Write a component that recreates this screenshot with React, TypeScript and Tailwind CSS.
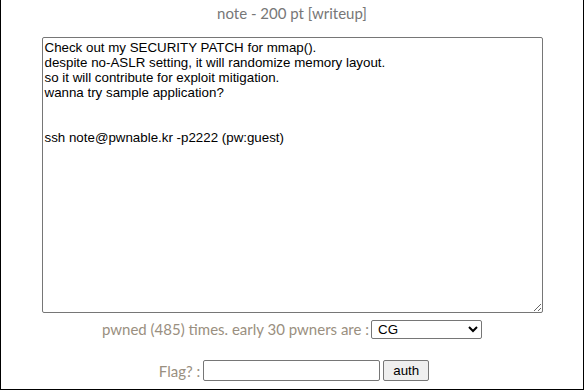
const description = `Check out my SECURITY PATCH for mmap().
despite no-ASLR setting, it will randomize memory layout.
so it will contribute for exploit mitigation.
wanna try sample application?


ssh note@pwnable.kr -p2222 (pw:guest)`;

export default function App() {
  return (
    <div className="h-[390px] w-[584px] overflow-hidden border-x border-b border-black bg-white">
      <div className="flex flex-col items-center">
        <div className="mt-[2px] h-[20px] font-['Lato',sans-serif] text-[15px] text-[#777]">
          note - 200 pt [writeup]
        </div>
        <textarea
          readOnly
          defaultValue={description}
          className="mt-[15px] h-[276px] w-[501px] resize rounded-[2px] border border-[#767676] px-[2px] pt-[2px] font-['Liberation_Sans',Arial,sans-serif] text-[13.33px] leading-[15px] text-black outline-none"
        />
        <div className="mt-[5px] flex items-center gap-[2px] font-['Lato',sans-serif] text-[15px] text-[#9a8f80]">
          <span>pwned (485) times. early 30 pwners are :</span>
          <select className="h-[19px] w-[111px] rounded-[2px] border border-[#767676] bg-white pl-[2px] font-['Liberation_Sans',Arial,sans-serif] text-[13.33px] text-black">
            <option>CG</option>
          </select>
        </div>
        <div className="mt-[19px] flex items-center gap-[3px] pl-[4px] font-['Lato',sans-serif] text-[15px] text-[#9a8f80]">
          <span>Flag? :</span>
          <input className="h-[21px] w-[177px] rounded-[2px] border border-[#767676] bg-white" />
          <button className="h-[21px] rounded-[2px] border border-[#767676] bg-[#efefef] px-[9px] font-['Liberation_Sans',Arial,sans-serif] text-[13.33px] text-black">
            auth
          </button>
        </div>
      </div>
    </div>
  );
}
